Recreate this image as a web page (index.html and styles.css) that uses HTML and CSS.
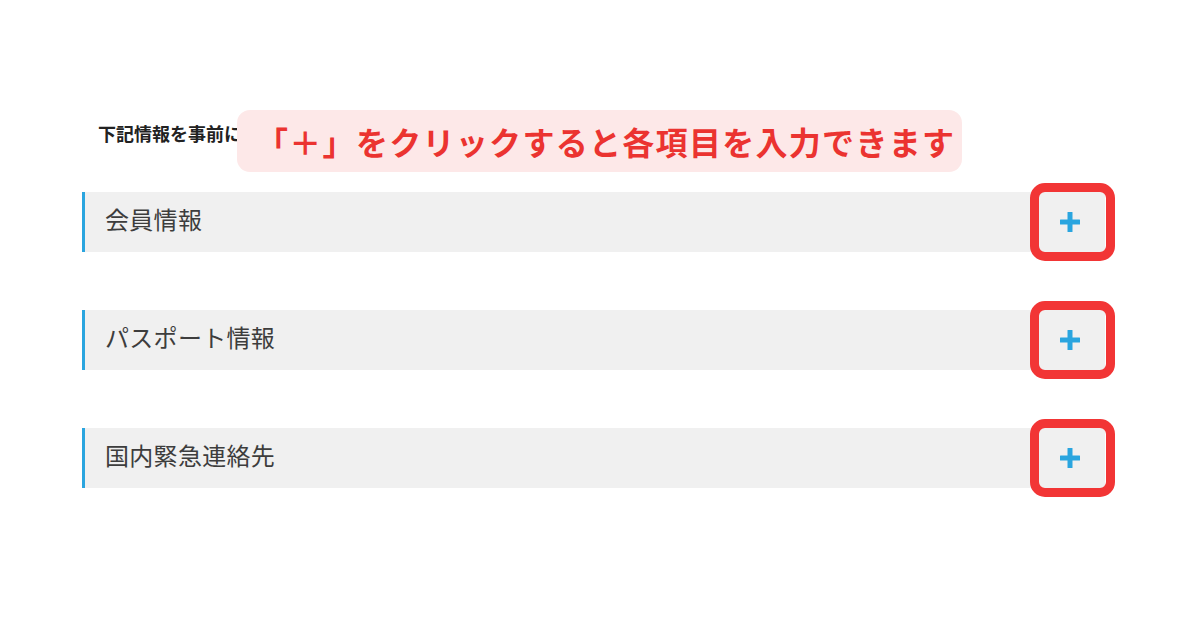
FILE: index.html
```html
<!DOCTYPE html>
<html lang="ja">
<head>
<meta charset="utf-8">
<title>事前入力</title>
<link rel="stylesheet" href="styles.css">
</head>
<body>
<main class="page">
  <div class="intro">
    <p class="lead">下記情報を事前に入力してください</p>
    <div class="callout">「＋」をクリックすると各項目を入力できます</div>
  </div>
  <ul class="sections">
    <li class="section">
      <span class="section-title">会員情報</span>
      <button class="toggle" type="button" aria-label="開く">
        <svg class="plus" viewBox="0 0 20 20" width="20" height="20"><rect x="7.5" y="0" width="5" height="20" rx="0.5"/><rect x="0" y="7.5" width="20" height="5" rx="0.5"/></svg>
      </button>
    </li>
    <li class="section">
      <span class="section-title">パスポート情報</span>
      <button class="toggle" type="button" aria-label="開く">
        <svg class="plus" viewBox="0 0 20 20" width="20" height="20"><rect x="7.5" y="0" width="5" height="20" rx="0.5"/><rect x="0" y="7.5" width="20" height="5" rx="0.5"/></svg>
      </button>
    </li>
    <li class="section">
      <span class="section-title">国内緊急連絡先</span>
      <button class="toggle" type="button" aria-label="開く">
        <svg class="plus" viewBox="0 0 20 20" width="20" height="20"><rect x="7.5" y="0" width="5" height="20" rx="0.5"/><rect x="0" y="7.5" width="20" height="5" rx="0.5"/></svg>
      </button>
    </li>
  </ul>
</main>
</body>
</html>
```

FILE: styles.css
```css
* { box-sizing: border-box; }
html, body { margin: 0; padding: 0; background: #ffffff; }
body {
  width: 1200px;
  height: 630px;
  overflow: hidden;
  font-family: "Noto Sans CJK JP", "Noto Sans", sans-serif;
}
.page {
  padding: 110px 95px 0 82px;
}
.intro {
  position: relative;
  height: 82px;
}
.lead {
  margin: 0;
  padding-left: 16px;
  line-height: 47px;
  font-size: 18px;
  font-weight: 700;
  color: #222;
  white-space: nowrap;
}
.callout {
  position: absolute;
  left: 155px;
  top: 0;
  width: 725px;
  height: 62px;
  display: flex;
  align-items: center;
  padding-left: 19px;
  padding-bottom: 1px;
  background: #fde8e8;
  border-radius: 13px;
  color: #eb3330;
  font-size: 32px;
  font-weight: 700;
  letter-spacing: 1.3px;
  white-space: nowrap;
}
.sections {
  list-style: none;
  margin: 0;
  padding: 0;
  display: flex;
  flex-direction: column;
  gap: 58px;
}
.section {
  display: flex;
  align-items: center;
  justify-content: space-between;
  height: 60px;
  background: #f0f0f0;
  border-left: 3px solid #2aa5df;
  padding-left: 20px;
}
.section-title {
  font-size: 24px;
  line-height: 1;
  padding-bottom: 6px;
  color: #3d3d3d;
  letter-spacing: 0.3px;
}
.toggle {
  position: relative;
  width: 64px;
  height: 100%;
  border: 0;
  padding: 0 6px 0 0;
  background: transparent;
  display: flex;
  align-items: center;
  justify-content: center;
}
.toggle::after {
  content: "";
  position: absolute;
  left: -11px;
  right: -10px;
  top: -9px;
  bottom: -9px;
  border: 9px solid #f23535;
  border-radius: 15px;
}
.plus { fill: #2aa5df; display: block; }
```
